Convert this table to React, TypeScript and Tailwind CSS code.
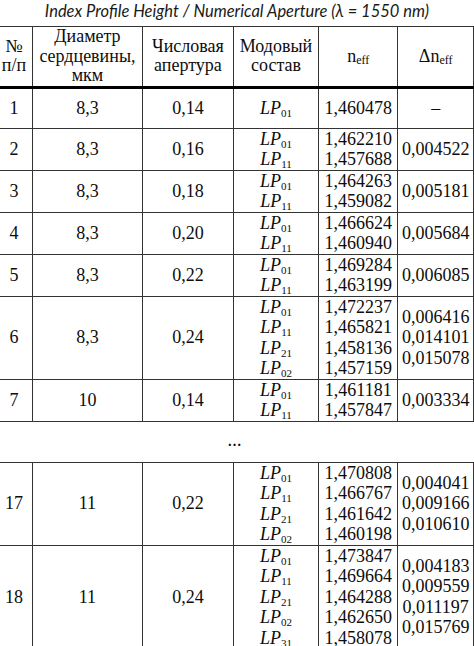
type Row = {
  n: string
  d: string
  na: string
  modes: string[]
  neff: string[]
  dn: string[]
}

const ROWS_TOP: Row[] = [
  { n: '1', d: '8,3', na: '0,14', modes: ['01'], neff: ['1,460478'], dn: ['–'] },
  { n: '2', d: '8,3', na: '0,16', modes: ['01', '11'], neff: ['1,462210', '1,457688'], dn: ['0,004522'] },
  { n: '3', d: '8,3', na: '0,18', modes: ['01', '11'], neff: ['1,464263', '1,459082'], dn: ['0,005181'] },
  { n: '4', d: '8,3', na: '0,20', modes: ['01', '11'], neff: ['1,466624', '1,460940'], dn: ['0,005684'] },
  { n: '5', d: '8,3', na: '0,22', modes: ['01', '11'], neff: ['1,469284', '1,463199'], dn: ['0,006085'] },
  {
    n: '6',
    d: '8,3',
    na: '0,24',
    modes: ['01', '11', '21', '02'],
    neff: ['1,472237', '1,465821', '1,458136', '1,457159'],
    dn: ['0,006416', '0,014101', '0,015078'],
  },
  { n: '7', d: '10', na: '0,14', modes: ['01', '11'], neff: ['1,461181', '1,457847'], dn: ['0,003334'] },
]

const ROWS_BOTTOM: Row[] = [
  {
    n: '17',
    d: '11',
    na: '0,22',
    modes: ['01', '11', '21', '02'],
    neff: ['1,470808', '1,466767', '1,461642', '1,460198'],
    dn: ['0,004041', '0,009166', '0,010610'],
  },
  {
    n: '18',
    d: '11',
    na: '0,24',
    modes: ['01', '11', '21', '02', '31'],
    neff: ['1,473847', '1,469664', '1,464288', '1,462650', '1,458078'],
    dn: ['0,004183', '0,009559', '0,011197', '0,015769'],
  },
]

const cell = 'border border-[#333] text-center align-middle p-0 font-normal'

function Lines({ items }: { items: string[] }) {
  return (
    <>
      {items.map((s) => (
        <div key={s} className="h-[20.5px]">
          {s}
        </div>
      ))}
    </>
  )
}

function Mode({ idx }: { idx: string }) {
  return (
    <div className="h-[20.5px]">
      <span className="italic">LP</span>
      <span className="relative top-[3px] text-[11px] leading-[0]">{idx}</span>
    </div>
  )
}

function DataRow({ r }: { r: Row }) {
  return (
    <tr className="h-[41px] leading-[20.5px]">
      <td className={cell}>{r.n}</td>
      <td className={cell}>{r.d}</td>
      <td className={cell}>{r.na}</td>
      <td className={cell}>
        {r.modes.map((m) => (
          <Mode key={m} idx={m} />
        ))}
      </td>
      <td className={cell}>
        <Lines items={r.neff} />
      </td>
      <td className={cell}>
        <Lines items={r.dn} />
      </td>
    </tr>
  )
}

export default function App() {
  return (
    <div className="h-[646px] w-[474px] overflow-hidden bg-white text-[#0d0d0d]">
      <h1 className="h-[26px] text-center font-['Lato',sans-serif] text-[16.5px] italic leading-[22px] text-[#1a1a1a]">
        Index Profile Height / Numerical Aperture (λ = 1550 nm)
      </h1>
      <table className="-ml-[5px] table-fixed border-collapse font-['Liberation_Serif',serif] text-[18px]">
        <colgroup>
          <col className="w-[38px]" />
          <col className="w-[111px]" />
          <col className="w-[92px]" />
          <col className="w-[86px]" />
          <col className="w-[80px]" />
          <col className="w-[76px]" />
        </colgroup>
        <thead>
          <tr className="h-[60px] leading-[19.5px]">
            <th className={`${cell} border-b-[3px] border-b-black`}>
              №
              <br />
              п/п
            </th>
            <th className={`${cell} border-b-[3px] border-b-black`}>
              Диаметр
              <br />
              сердцевины,
              <br />
              мкм
            </th>
            <th className={`${cell} border-b-[3px] border-b-black`}>
              Числовая
              <br />
              апертура
            </th>
            <th className={`${cell} border-b-[3px] border-b-black`}>
              Модовый
              <br />
              состав
            </th>
            <th className={`${cell} border-b-[3px] border-b-black`}>
              n<span className="relative top-[2px] text-[12px] leading-[0]">eff</span>
            </th>
            <th className={`${cell} border-b-[3px] border-b-black`}>
              Δn<span className="relative top-[2px] text-[12px] leading-[0]">eff</span>
            </th>
          </tr>
        </thead>
        <tbody>
          {ROWS_TOP.map((r) => (
            <DataRow key={r.n} r={r} />
          ))}
          <tr className="h-[41px]">
            <td colSpan={6} className="border-y border-[#333] text-center align-middle text-[14px] font-bold leading-none">
              …
            </td>
          </tr>
          {ROWS_BOTTOM.map((r) => (
            <DataRow key={r.n} r={r} />
          ))}
        </tbody>
      </table>
    </div>
  )
}
